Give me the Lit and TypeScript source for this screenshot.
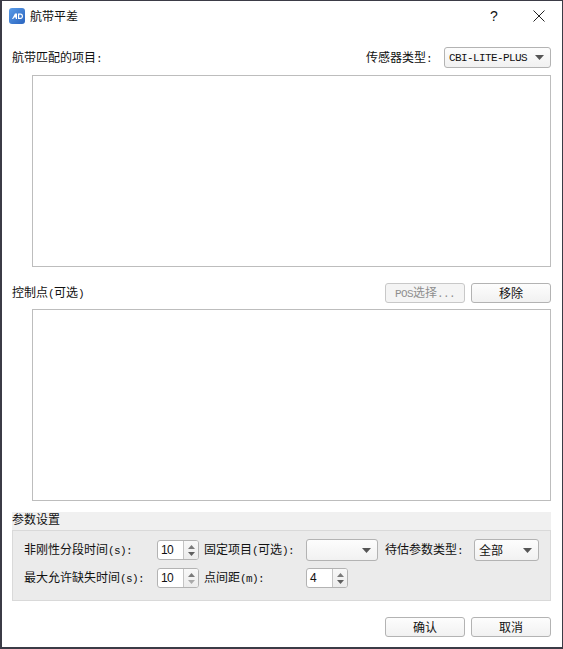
import { LitElement, html, css, svg } from "lit";
import { customElement } from "lit/decorators.js";

const arrow = svg`<svg class="arrow" width="9" height="5" viewBox="0 0 9 5"><path d="M0 0H9L4.5 5Z" fill="#555"/></svg>`;

@customElement("app-root")
export class AppRoot extends LitElement {
  static styles = css`
    :host { display: block; width: 563px; height: 649px; }
    * { box-sizing: border-box; }
    .win {
      width: 563px; height: 649px; background: #fff;
      border: 1px solid #3b3b46; border-width: 1px 1px 2px 2px;
      display: flex; flex-direction: column;
      font: 12px "Noto Sans CJK SC", "Liberation Sans", sans-serif; color: #111;
      line-height: 16px;
    }
    .titlebar { height: 29px; display: flex; align-items: center; padding-left: 7px; flex: none; }
    .logo { width: 16px; height: 16px; margin-right: 5px; flex: none; }
    .title { flex: 1; }
    .help { width: 46px; text-align: center; font: 14px "Liberation Sans", sans-serif; padding-left: 2px; }
    .close { width: 46px; height: 29px; display: flex; align-items: center; justify-content: center; }
    .body { flex: 1; display: flex; flex-direction: column; padding: 17px 11px 10px 10px; }
    .row { display: flex; align-items: center; height: 21px; }
    .grow { flex: 1; }
    .typelabel { margin-right: 12px; }
    .list { height: 192px; margin-left: 20px; border: 1px solid #bdbdbd; background: #fff; margin-top: 7px; flex: none; }
    .list.second { margin-top: 6px; }
    .row2 { margin-top: 16px; height: 20px; gap: 6px; }
    .combo {
      display: flex; align-items: center; justify-content: space-between;
      border: 1px solid #b3b3b3; border-radius: 3px;
      background: linear-gradient(#fdfdfd, #f1f1f1); height: 21px; padding: 0 6px 0 4px;
    }
    .a { font-family: "Liberation Mono", monospace; font-size: 11px; letter-spacing: -0.6px; }
    .c-type { width: 107px; }
    .c-fixed { width: 72px; height: 22px; }
    .c-all { width: 65px; height: 22px; }
    .btn {
      width: 80px; height: 20px; border: 1px solid #b3b3b3; border-radius: 3px;
      background: linear-gradient(#fdfdfd, #f1f1f1); display: flex; align-items: center; justify-content: center;
    }
    .btn.off { color: #8e8e8e; background: #f4f4f4; border-color: #c8c8c8; }
    .grouptitle { background: #f0f0f0; height: 18px; margin-top: 11px; flex: none; line-height: 13px; }
    .group {
      height: 71px; background: #ebebeb; border: 1px solid #d9d9d9; flex: none;
      padding: 8px 0 0 11px;
      display: grid; grid-template-columns: 133px 47px 102px 79px 89px auto;
      grid-auto-rows: 22px; row-gap: 6px; align-items: center; justify-content: start;
    }
    .spin {
      display: flex; height: 20px; width: 42px; border: 1px solid #b3b3b3; border-radius: 3px;
      background: #fff; overflow: hidden;
    }
    .val { flex: 1; padding-left: 3px; font-family: "Liberation Sans", sans-serif; font-size: 12px; line-height: 18px; letter-spacing: -0.6px; }
    .ud {
      width: 15px; border-left: 1px solid #c4c4c4; background: linear-gradient(#f8f8f8, #ececec);
      display: flex; flex-direction: column; align-items: center; justify-content: center; gap: 3px;
    }
    .ud svg { display: block; }
    .footer { display: flex; justify-content: flex-end; gap: 6px; margin-top: 16px; flex: none; }
  `;

  private spin(v: string, dim = false) {
    return html`<div class="spin"><span class="val">${v}</span>
      <span class="ud">
        <svg width="7" height="4" viewBox="0 0 7 4"><path d="M0 4L3.5 0L7 4Z" fill="#7a7a7a"/></svg>
        <svg width="7" height="4" viewBox="0 0 7 4"><path d="M0 0H7L3.5 4Z" fill="${dim ? "#a9a9a9" : "#5f5f5f"}"/></svg>
      </span></div>`;
  }

  render() {
    return html`<div class="win">
      <div class="titlebar">
        <svg class="logo" viewBox="0 0 16 16">
          <defs><linearGradient id="g" x1="0" y1="0" x2="1" y2="1"><stop offset="0" stop-color="#5a9ce8"/><stop offset="1" stop-color="#2a64bf"/></linearGradient></defs>
          <rect width="16" height="16" rx="3" fill="url(#g)"/>
          <path d="M3 11L6 5.5H8V11H6.8V9.6H5L4.3 11ZM9 5.5H11.5C13.2 5.5 14 6.8 14 8.2C14 9.8 13 11 11.4 11H9ZM10.2 6.7V9.8H11.3C12.2 9.8 12.8 9.2 12.8 8.2C12.8 7.3 12.3 6.7 11.3 6.7Z" fill="#fff"/>
        </svg>
        <span class="title">航带平差</span>
        <span class="help">?</span>
        <span class="close"><svg width="12" height="12" viewBox="0 0 12 12"><path d="M.5.5L11.5 11.5M11.5.5L.5 11.5" stroke="#222" fill="none"/></svg></span>
      </div>
      <div class="body">
        <div class="row">
          <span class="grow">航带匹配的项目<span class="a">:</span></span>
          <span class="typelabel">传感器类型<span class="a">:</span></span>
          <div class="combo c-type"><span class="a">CBI-LITE-PLUS</span>${arrow}</div>
        </div>
        <div class="list"></div>
        <div class="row row2">
          <span class="grow">控制点<span class="a">(</span>可选<span class="a">)</span></span>
          <div class="btn off"><span><span class="a">POS</span>选择<span class="a">...</span></span></div>
          <div class="btn">移除</div>
        </div>
        <div class="list second"></div>
        <div class="grouptitle">参数设置</div>
        <div class="group">
          <span>非刚性分段时间<span class="a">(s):</span></span>
          ${this.spin("10")}
          <span>固定项目<span class="a">(</span>可选<span class="a">):</span></span>
          <div class="combo c-fixed"><span></span>${arrow}</div>
          <span>待估参数类型<span class="a">:</span></span>
          <div class="combo c-all"><span>全部</span>${arrow}</div>
          <span>最大允许缺失时间<span class="a">(s):</span></span>
          ${this.spin("10", true)}
          <span>点间距<span class="a">(m):</span></span>
          ${this.spin("4")}
        </div>
        <div class="footer">
          <div class="btn">确认</div>
          <div class="btn">取消</div>
        </div>
      </div>
    </div>`;
  }
}
